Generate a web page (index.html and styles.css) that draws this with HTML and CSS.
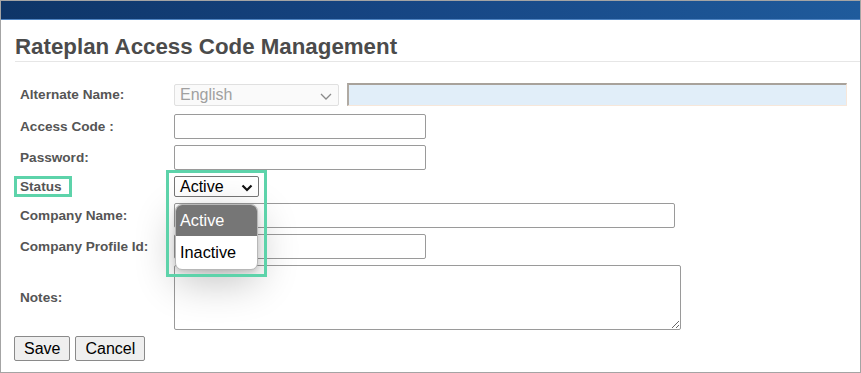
FILE: index.html
```html
<!DOCTYPE html>
<html>
<head>
<meta charset="utf-8">
<title>Rateplan Access Code Management</title>
<link rel="stylesheet" href="styles.css">
</head>
<body>
<div class="frame">
  <div class="topbar"></div>
  <h1 class="title">Rateplan Access Code Management</h1>
  <form class="form">
    <div class="row row-first">
      <label class="label">Alternate Name:</label>
      <div class="select-wrap select-disabled">
        <span class="select-text">English</span>
        <svg class="chev-light" width="12" height="7" viewBox="0 0 12 7"><path d="M1 1 L6 6 L11 1" fill="none" stroke="#8a8a8a" stroke-width="1.3"/></svg>
      </div>
      <div class="alt-input"></div>
    </div>
    <div class="row">
      <label class="label">Access Code :</label>
      <div class="input w-short"></div>
    </div>
    <div class="row">
      <label class="label">Password:</label>
      <div class="input w-short"></div>
    </div>
    <div class="row row-status">
      <label class="label"><span class="mark">Status</span></label>
      <div class="status-wrap">
        <div class="select-wrap select-status">
          <span class="select-text">Active</span>
          <svg class="chev-bold" width="12" height="8" viewBox="0 0 12 8"><path d="M1.5 1.5 L6 6 L10.5 1.5" fill="none" stroke="#111" stroke-width="2.2"/></svg>
        </div>
        <div class="popup">
          <div class="opt opt-sel">Active</div>
          <div class="opt">Inactive</div>
        </div>
        <div class="highlight"></div>
      </div>
    </div>
    <div class="row">
      <label class="label">Company Name:</label>
      <div class="input w-long"></div>
    </div>
    <div class="row">
      <label class="label">Company Profile Id:</label>
      <div class="input w-short"></div>
    </div>
    <div class="row row-notes">
      <label class="label">Notes:</label>
      <textarea class="notes"></textarea>
    </div>
    <div class="buttons">
      <button type="button" class="btn">Save</button>
      <button type="button" class="btn">Cancel</button>
    </div>
  </form>
</div>
</body>
</html>
```

FILE: styles.css
```css
* { box-sizing: border-box; }
html, body { margin: 0; padding: 0; background: #fff; }
body { font-family: "Liberation Sans", Arial, sans-serif; }

.frame {
  width: 861px;
  height: 373px;
  border: 1px solid #a4a4a4;
  overflow: hidden;
  position: relative;
}

.topbar {
  height: 19px;
  background: linear-gradient(to right, #0e3567 0%, #164583 45%, #1f5b9c 100%);
  border-bottom: 1px solid #4f84c2;
}

.title {
  margin: 14px 0 0 14px;
  padding: 0 0 1px 0;
  font-size: 22.3px;
  line-height: 26px;
  font-weight: bold;
  color: #4b4b4b;
  border-bottom: 1px solid #e6e6e6;
}

.form {
  margin: 21px 0 0 19px;
  display: flex;
  flex-direction: column;
  gap: 6px;
}

.row {
  display: flex;
  align-items: center;
  height: 25px;
}
.row-first { align-items: flex-start; }
.row-status { height: 21px; }
.row-notes { height: 65px; }

.label {
  width: 154px;
  flex: none;
  font-size: 13.6px;
  font-weight: bold;
  color: #555;
}
.row-first .label { margin-top: 4px; }

.mark {
  display: inline-block;
  border: 3px solid #5dd3aa;
  padding: 0 7px 0 3px;
  margin-left: -6px;
  line-height: 15px;
}

.input {
  height: 25px;
  border: 1px solid #9a9a9a;
  border-radius: 2px;
  background: #fff;
}
.w-short { width: 252px; }
.w-long { width: 501px; }

.select-wrap {
  position: relative;
  border-radius: 2px;
  font-size: 16px;
  display: flex;
  align-items: center;
  padding-left: 5px;
}
.select-disabled {
  width: 165px;
  height: 22px;
  margin-top: 1px;
  border: 1px solid #e0e0e0;
  background: #fafafa;
  color: #a0a0a0;
}
.chev-light { position: absolute; right: 6px; top: 8px; }

.alt-input {
  width: 500px;
  height: 23px;
  margin-left: 8px;
  background: #e1eef9;
  border-top: 2px solid #a8a29b;
  border-left: 2px solid #b0aaa3;
  border-right: 1px solid #f7e7da;
  border-bottom: 1px solid #f7e7da;
}

.status-wrap { position: relative; width: 85px; height: 21px; }
.select-status {
  width: 85px;
  height: 21px;
  border: 1px solid #767676;
  background: #fff;
  color: #000;
}
.chev-bold { position: absolute; right: 5px; top: 7px; }

.popup {
  position: absolute;
  left: 1px;
  top: 28px;
  width: 83px;
  height: 66px;
  background: #fff;
  border: 1px solid #b8b8b8;
  border-radius: 7px;
  overflow: hidden;
  box-shadow: 0 12px 40px rgba(0,0,0,0.24), 0 2px 5px rgba(0,0,0,0.14);
  z-index: 2;
  font-size: 16.3px;
}
.opt {
  height: 33px;
  line-height: 33px;
  padding-left: 4px;
  color: #000;
}
.opt-sel { height: 31px; line-height: 31px; background: #767676; color: #fff; }

.highlight {
  position: absolute;
  left: -8px;
  top: -6px;
  width: 101px;
  height: 107px;
  border: 3px solid #5dd3aa;
  z-index: 3;
  pointer-events: none;
}

.notes {
  width: 507px;
  height: 65px;
  margin: 0;
  border: 1px solid #9a9a9a;
  border-radius: 2px;
  resize: both;
  font-family: inherit;
}

.buttons {
  display: flex;
  gap: 5px;
  margin-left: -6px;
}
.btn {
  height: 25px;
  padding: 0 9px;
  font-family: "Liberation Sans", Arial, sans-serif;
  font-size: 16px;
  color: #000;
  background: #efefef;
  border: 1px solid #8a8a8a;
  border-radius: 2px;
}
```
